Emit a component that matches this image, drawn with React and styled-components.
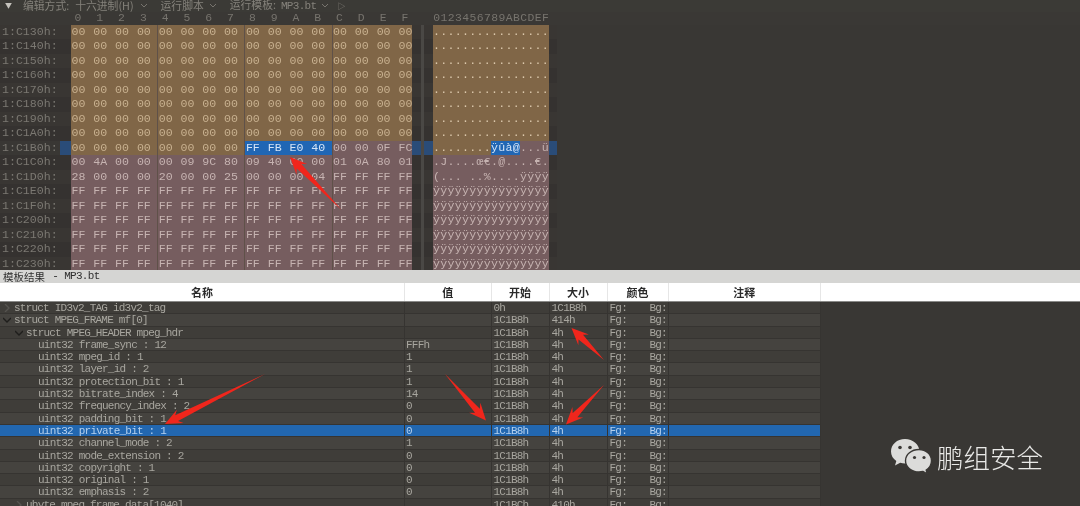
import styled, { createGlobalStyle } from 'styled-components';

const GlobalStyle = createGlobalStyle`
  html, body {
    margin: 0;
    padding: 0;
    background: #393734;
  }
`;

const MONO = `"Liberation Mono", "Noto Sans CJK SC", monospace`;
const CJK = `"Noto Sans CJK SC", "Liberation Sans", sans-serif`;

const Page = styled.div`
  position: relative;
  width: 1080px;
  height: 506px;
  overflow: hidden;
  background: #393734;
  font-family: ${MONO};
  filter: blur(0.4px);
`;

const Toolbar = styled.div`
  height: 11.5px;
  display: flex;
  align-items: center;
  padding-left: 5px;
  font-family: ${CJK};
  font-size: 10.8px;
  line-height: 11.5px;
  color: #85827b;
  background: #3b3a36;
  white-space: pre;
`;

const ToolGlyph = styled.span`
  width: 18px;
  font-size: 7px;
  color: #c5c3bd;
`;

const ToolItem = styled.span`
  display: flex;
  align-items: center;
  gap: ${(p) => p.$inner}px;
  margin-right: ${(p) => p.$gap}px;
`;

const ToolValue = styled.span`
  margin-left: 6px;
`;

const ToolMono = styled.span`
  font-family: ${MONO};
  font-size: 11px;
  letter-spacing: -0.7px;
  margin-left: 5px;
`;

const PlayGlyph = styled.span`
  font-size: 8px;
`;

const HexHead = styled.div`
  height: 13px;
  display: flex;
  font-size: 11.4px;
  line-height: 13px;
  color: #77746e;
  padding-left: 71px;
  background: #3a3835;
`;

const HexViewport = styled.div`
  height: 245.5px;
  overflow: hidden;
`;

const HexRow = styled.div`
  height: 14.5px;
  width: 557px;
  display: flex;
  line-height: 14.5px;
  font-size: 11.6px;
  background: ${(p) => (p.$active ? '#2a4c78' : p.$odd ? '#353230' : '#393633')};
`;

const Addr = styled.span`
  width: 60px;
  padding-left: 2px;
  box-sizing: border-box;
  color: #7b7872;
  background: ${(p) => (p.$active ? '#393734' : 'transparent')};
`;

const Gutter = styled.span`
  width: 11px;
`;

const ByteCell = styled.span`
  width: ${(p) => (p.$last ? 14 : 21.8)}px;
  flex: none;
  box-sizing: border-box;
  padding-left: 0.5px;
  color: ${(p) => (p.$sel ? '#d3e4f7' : p.$tan ? '#c7b08f' : '#c6b3b1')};
  background: ${(p) => (p.$sel ? '#2066b4' : p.$tan ? '#806647' : '#765d5f')};
  box-shadow: ${(p) => (p.$edge ? 'inset -1px 0 0 #5f5149' : 'none')};
`;

const HeadCell = styled.span`
  width: 21.8px;
  flex: none;
  padding-left: 3.5px;
  box-sizing: border-box;
`;

const AsciiHead = styled.span`
  margin-left: 13.5px;
  letter-spacing: 0.41px;
`;

const Divider = styled.span`
  width: 21px;
  flex: none;
  &::after {
    content: '';
    display: block;
    margin-left: 9px;
    width: 3px;
    height: 100%;
    background: #4a4845;
  }
`;

const AsciiCell = styled.span`
  width: 7.25px;
  flex: none;
  text-align: center;
  color: ${(p) => (p.$sel ? '#d3e4f7' : p.$tan ? '#dcc9ad' : '#c6b3b1')};
  background: ${(p) => (p.$sel ? '#2066b4' : p.$tan ? '#806647' : '#765d5f')};
`;

const TemplateBar = styled.div`
  height: 13px;
  padding-left: 3px;
  display: flex;
  align-items: center;
  gap: 5px;
  background: #d5d5d3;
  color: #2f2f2f;
  font-family: ${CJK};
  font-size: 10.5px;
  line-height: 13px;
  white-space: pre;
`;

const BarMono = styled.span`
  font-family: ${MONO};
  font-size: 11px;
  letter-spacing: -0.7px;
`;

const cols = '405px 86.5px 58px 58px 61px 152.5px';

const TableHead = styled.div`
  height: 18px;
  display: grid;
  grid-template-columns: ${cols} 1fr;
  background: #fff;
  border-bottom: 1px solid #8a8a88;
`;

const HeadTitle = styled.div`
  text-align: center;
  font-family: ${CJK};
  font-size: 11px;
  font-weight: 700;
  line-height: 18px;
  color: #2a2a2a;
  border-right: 1px solid #e6e6e6;
`;

const TableRow = styled.div`
  height: 12.3px;
  display: grid;
  grid-template-columns: ${cols};
  width: 821px;
  font-size: 11px;
  line-height: 12.3px;
  letter-spacing: -0.78px;
  white-space: pre;
  box-shadow: inset 0 -1px 0 #363431;
  color: ${(p) => (p.$sel ? '#b4d0ee' : '#a8a69f')};
  background: ${(p) => (p.$sel ? '#2267b0' : p.$odd ? '#45433f' : '#3f3d39')};
`;

const Cell = styled.div`
  padding-left: ${(p) => p.$pad ?? 2}px;
  box-shadow: inset -1px 0 0 #363431;
  overflow: hidden;
`;

const NameCell = styled(Cell)`
  display: flex;
  align-items: center;
  padding-left: ${(p) => p.$level * 12 + 3}px;
`;

const Twisty = styled.svg`
  width: 8px;
  height: 8px;
  margin-right: 3px;
  flex: none;
  stroke: ${(p) => p.$color};
  stroke-width: 1.4;
  fill: none;
`;

const ColorCell = styled(Cell)`
  display: flex;
  gap: 22.5px;
`;

const Overlay = styled.svg`
  position: absolute;
  inset: 0;
  width: 1080px;
  height: 506px;
  pointer-events: none;
`;

const Brand = styled.div`
  position: absolute;
  left: 890px;
  top: 439px;
  display: flex;
  align-items: center;
  gap: 4px;
`;

const BrandText = styled.span`
  font-family: ${CJK};
  font-size: 26.5px;
  font-weight: 300;
  line-height: 36px;
  color: #e9e9e7;
`;

const hexHead = '0123456789ABCDEF'.split('');

const zeros = Array(16).fill('00');
const ffs = Array(16).fill('FF');

const hexRows = [
  { addr: '1:C130h:', bytes: zeros, ascii: '................', tan: 16 },
  { addr: '1:C140h:', bytes: zeros, ascii: '................', tan: 16 },
  { addr: '1:C150h:', bytes: zeros, ascii: '................', tan: 16 },
  { addr: '1:C160h:', bytes: zeros, ascii: '................', tan: 16 },
  { addr: '1:C170h:', bytes: zeros, ascii: '................', tan: 16 },
  { addr: '1:C180h:', bytes: zeros, ascii: '................', tan: 16 },
  { addr: '1:C190h:', bytes: zeros, ascii: '................', tan: 16 },
  { addr: '1:C1A0h:', bytes: zeros, ascii: '................', tan: 16 },
  {
    addr: '1:C1B0h:',
    bytes: '00 00 00 00 00 00 00 00 FF FB E0 40 00 00 0F FC'.split(' '),
    ascii: '........ÿûà@...ü',
    tan: 8,
    active: true,
  },
  {
    addr: '1:C1C0h:',
    bytes: '00 4A 00 00 00 09 9C 80 09 40 00 00 01 0A 80 01'.split(' '),
    ascii: '.J....œ€.@....€.',
    tan: 0,
  },
  {
    addr: '1:C1D0h:',
    bytes: '28 00 00 00 20 00 00 25 00 00 00 04 FF FF FF FF'.split(' '),
    ascii: '(... ..%....ÿÿÿÿ',
    tan: 0,
  },
  { addr: '1:C1E0h:', bytes: ffs, ascii: 'ÿÿÿÿÿÿÿÿÿÿÿÿÿÿÿÿ', tan: 0 },
  { addr: '1:C1F0h:', bytes: ffs, ascii: 'ÿÿÿÿÿÿÿÿÿÿÿÿÿÿÿÿ', tan: 0 },
  { addr: '1:C200h:', bytes: ffs, ascii: 'ÿÿÿÿÿÿÿÿÿÿÿÿÿÿÿÿ', tan: 0 },
  { addr: '1:C210h:', bytes: ffs, ascii: 'ÿÿÿÿÿÿÿÿÿÿÿÿÿÿÿÿ', tan: 0 },
  { addr: '1:C220h:', bytes: ffs, ascii: 'ÿÿÿÿÿÿÿÿÿÿÿÿÿÿÿÿ', tan: 0 },
  { addr: '1:C230h:', bytes: ffs, ascii: 'ÿÿÿÿÿÿÿÿÿÿÿÿÿÿÿÿ', tan: 0 },
];

const heads = ['名称', '值', '开始', '大小', '颜色', '注释'];

const fields = [
  { name: 'struct ID3v2_TAG id3v2_tag', level: 0, twisty: 'right', start: '0h', size: '1C1B8h' },
  { name: 'struct MPEG_FRAME mf[0]', level: 0, twisty: 'down', size: '414h' },
  { name: 'struct MPEG_HEADER mpeg_hdr', level: 1, twisty: 'down' },
  { name: 'uint32 frame_sync : 12', level: 2, value: 'FFFh' },
  { name: 'uint32 mpeg_id : 1', level: 2, value: '1' },
  { name: 'uint32 layer_id : 2', level: 2, value: '1' },
  { name: 'uint32 protection_bit : 1', level: 2, value: '1' },
  { name: 'uint32 bitrate_index : 4', level: 2, value: '14' },
  { name: 'uint32 frequency_index : 2', level: 2, value: '0' },
  { name: 'uint32 padding_bit : 1', level: 2, value: '0' },
  { name: 'uint32 private_bit : 1', level: 2, value: '0', sel: true },
  { name: 'uint32 channel_mode : 2', level: 2, value: '1' },
  { name: 'uint32 mode_extension : 2', level: 2, value: '0' },
  { name: 'uint32 copyright : 1', level: 2, value: '0' },
  { name: 'uint32 original : 1', level: 2, value: '0' },
  { name: 'uint32 emphasis : 2', level: 2, value: '0' },
  { name: 'ubyte mpeg_frame_data[1040]', level: 1, twisty: 'right', start: '1C1BCh', size: '410h' },
];

// tapered annotation arrow, thin at the tail and with swept back barbs at the tip
const arrowPoints = ([tx, ty], [hx, hy], head = 17, barb = 7.5, neck = 3.2) => {
  const len = Math.hypot(hx - tx, hy - ty);
  const ux = (hx - tx) / len;
  const uy = (hy - ty) / len;
  const px = -uy;
  const py = ux;
  const at = (back, side) => `${hx - ux * back + px * side},${hy - uy * back + py * side}`;
  return [
    `${tx},${ty}`,
    at(head - 4, neck),
    at(head, barb),
    `${hx},${hy}`,
    at(head, -barb),
    at(head - 4, -neck),
  ].join(' ');
};

const arrows = [
  [[341.5, 210], [290, 157]],
  [[265, 374], [165, 424]],
  [[604, 360], [571.5, 328]],
  [[445, 374], [486, 420.5]],
  [[604, 385], [566, 424.5]],
];

const Chevron = () => (
  <svg width="8" height="6" viewBox="0 0 8 6" fill="none" stroke="#77746e" strokeWidth="1">
    <path d="M1 1l3 3 3-3" />
  </svg>
);

const WeChatMark = () => (
  <svg width="43" height="36" viewBox="0 0 43 36">
    <path d="M15 0C7 0 1 5.500 1 12.500c0 4 2 7.200 5.300 9.500l-1.300 4.500 5.200-2.800c1.600.4 3.200.7 4.800.7 8 0 14.500-5.500 14.500-12S23 0 15 0z" fill="#dcdcda" />
    <circle cx="10" cy="8.500" r="1.800" fill="#3a3835" />
    <circle cx="20" cy="8.500" r="1.800" fill="#3a3835" />
    <path d="M29 10.500c-7.500 0-13.500 5-13.500 11.300S21.500 33 29 33c1.400 0 2.700-.2 4-.5l4.200 2.400-1-3.800c3.300-2.100 5.300-5.600 5.300-9.300 0-6.300-5.500-11.300-12.500-11.300z" fill="#dcdcda" stroke="#3a3835" strokeWidth="1.400" />
    <circle cx="24.500" cy="18.500" r="1.600" fill="#3a3835" />
    <circle cx="34" cy="18.500" r="1.600" fill="#3a3835" />
  </svg>
);

const HexPanel = () => (
  <>
    <HexHead>
      {hexHead.map((c) => (
        <HeadCell key={c}>{c}</HeadCell>
      ))}
      <AsciiHead>0123456789ABCDEF</AsciiHead>
    </HexHead>
    <HexViewport>
      {hexRows.map((row, r) => (
        <HexRow key={row.addr} $active={row.active} $odd={r % 2 === 1}>
          <Addr $active={row.active}>{row.addr}</Addr>
          <Gutter />
          {row.bytes.map((b, i) => (
            <ByteCell
              key={i}
              $tan={i < row.tan}
              $sel={row.active && i >= 8 && i < 12}
              $edge={i % 4 === 3 && i < 15}
              $last={i === 15}
            >
              {b}
            </ByteCell>
          ))}
          <Divider />
          {row.ascii.split('').map((c, i) => (
            <AsciiCell key={i} $tan={i < row.tan} $sel={row.active && i >= 8 && i < 12}>
              {c}
            </AsciiCell>
          ))}
        </HexRow>
      ))}
    </HexViewport>
  </>
);

const TemplateTable = () => (
  <>
    <TableHead>
      {heads.map((title) => (
        <HeadTitle key={title}>{title}</HeadTitle>
      ))}
    </TableHead>
    {fields.map((f, i) => (
      <TableRow key={f.name} $sel={f.sel} $odd={i % 2 === 1}>
        <NameCell $level={f.level}>
          <Twisty viewBox="0 0 8 8" $color={f.twisty === 'right' ? '#55534f' : '#1f1e1c'}>
            {f.twisty && <path d={f.twisty === 'right' ? 'M2 0l4 4-4 4' : 'M0 2l4 4 4-4'} />}
          </Twisty>
          {f.name}
        </NameCell>
        <Cell $pad={1}>{f.value}</Cell>
        <Cell>{f.start ?? '1C1B8h'}</Cell>
        <Cell>{f.size ?? '4h'}</Cell>
        <ColorCell>
          <span>Fg:</span>
          <span>Bg:</span>
        </ColorCell>
        <Cell />
      </TableRow>
    ))}
  </>
);

export default function App() {
  return (
    <Page>
      <GlobalStyle />
      <Toolbar>
        <ToolGlyph>▼</ToolGlyph>
        <ToolItem $gap={13} $inner={6}>
          <span>
            编辑方式:<ToolValue>十六进制(H)</ToolValue>
          </span>
          <Chevron />
        </ToolItem>
        <ToolItem $gap={13} $inner={5}>
          <span>运行脚本</span>
          <Chevron />
        </ToolItem>
        <ToolItem $gap={8} $inner={5}>
          <span>
            运行模板:<ToolMono>MP3.bt</ToolMono>
          </span>
          <Chevron />
        </ToolItem>
        <PlayGlyph>▷</PlayGlyph>
      </Toolbar>
      <HexPanel />
      <TemplateBar>
        模板结果 <BarMono>- MP3.bt</BarMono>
      </TemplateBar>
      <TemplateTable />
      <Overlay viewBox="0 0 1080 506">
        {arrows.map(([tail, tip], i) => (
          <polygon key={i} points={arrowPoints(tail, tip)} fill="#f0261c" />
        ))}
      </Overlay>
      <Brand>
        <WeChatMark />
        <BrandText>鹏组安全</BrandText>
      </Brand>
    </Page>
  );
}
